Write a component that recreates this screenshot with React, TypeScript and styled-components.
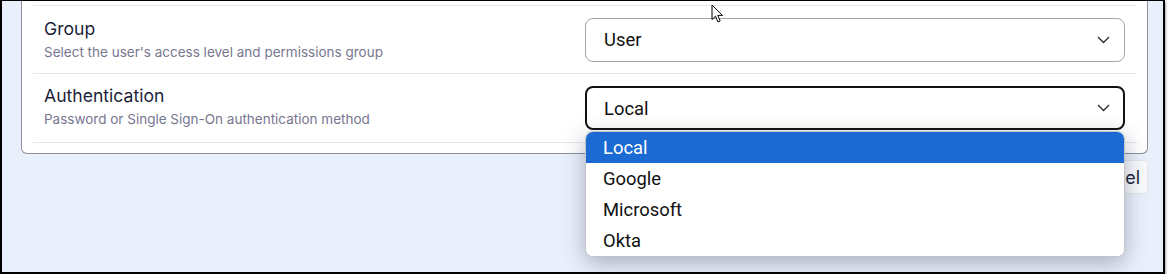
import React from "react";
import styled, { createGlobalStyle } from "styled-components";

const Global = createGlobalStyle`
  html, body { margin: 0; padding: 0; background: #ffffff; }
  * { box-sizing: border-box; }
`;

const Frame = styled.div`
  position: relative;
  width: 1165px;
  height: 274px;
  border-style: solid;
  border-color: #000;
  border-width: 1px 2px 2px 2px;
  background: #eaf0fb;
  overflow: hidden;
  box-shadow: 1px 2px 2px rgba(0, 0, 0, 0.35);
  padding: 0 15px 0 19px;
  display: flex;
  flex-direction: column;
`;

const Card = styled.div`
  background: #ffffff;
  border: 1px solid #8e8e9c;
  border-top: none;
  border-radius: 0 0 6px 6px;
  padding: 4px 10px 10px 11px;
`;

const Row = styled.div<{ $last?: boolean }>`
  display: flex;
  align-items: center;
  justify-content: space-between;
  height: ${(p) => (p.$last ? "70px" : "68px")};
  border-top: 1px solid #e6e7ec;
  border-bottom: ${(p) => (p.$last ? "1px solid #e6e7ec" : "none")};
  padding: 0 12px 0 11px;
`;

const Texts = styled.div<{ $lift?: number }>`
  display: flex;
  flex-direction: column;
  gap: 5px;
  padding-bottom: ${(p) => p.$lift ?? 2}px;
`;

const Label = styled.div`
  font-family: Inter, "Noto Sans", sans-serif;
  font-size: 17.6px;
  color: #1c1f3a;
`;

const Desc = styled.div`
  font-family: Inter, "Noto Sans", sans-serif;
  font-size: 13.5px;
  color: #77768f;
`;

const SelectWrap = styled.div`
  position: relative;
  width: 540px;
`;

const SelectBox = styled.div<{ $focused?: boolean }>`
  height: 44px;
  display: flex;
  align-items: center;
  justify-content: space-between;
  border-radius: 8px;
  border: ${(p) => (p.$focused ? "2px solid #111" : "1px solid #a3a3a8")};
  padding: ${(p) => (p.$focused ? "0 13px 0 17px" : "0 14px 0 18px")};
  background: #fff;
  font-family: Roboto, "Liberation Sans", sans-serif;
  font-size: 18.4px;
  color: #111;
`;

const Menu = styled.div`
  position: absolute;
  left: 0;
  right: 0;
  top: calc(100% + 1px);
  background: #fff;
  border: 1px solid #c4c4c8;
  border-radius: 8px;
  overflow: hidden;
  box-shadow: 0 6px 22px rgba(40, 50, 80, 0.35);
  z-index: 5;
`;

const Option = styled.div<{ $active?: boolean }>`
  height: 31px;
  display: flex;
  align-items: center;
  padding-left: 17px;
  font-family: Roboto, "Liberation Sans", sans-serif;
  font-size: 18.4px;
  background: ${(p) => (p.$active ? "#1b69d3" : "#fff")};
  color: ${(p) => (p.$active ? "#fff" : "#111")};
`;

const Actions = styled.div`
  display: flex;
  justify-content: flex-end;
  margin-top: 6px;
`;

const Button = styled.button`
  height: 34px;
  padding: 0 7px 0 12px;
  background: #f9fafc;
  border: 1px solid #e4e7ef;
  border-radius: 4px;
  font-family: Inter, "Noto Sans", sans-serif;
  font-size: 18px;
  color: #1c1f3a;
`;

const Cursor = styled.svg`
  position: absolute;
  left: 709px;
  top: 3px;
  z-index: 10;
`;

const Chevron = () => (
  <svg width="13" height="8" viewBox="0 0 13 8">
    <polyline points="1,1 6.5,6.5 12,1" fill="none" stroke="#2a2a2a" strokeWidth="1.3" />
  </svg>
);

export default function App() {
  return (
    <>
      <Global />
      <Frame>
        <Card>
          <Row>
            <Texts $lift={2}>
              <Label>Group</Label>
              <Desc>Select the user's access level and permissions group</Desc>
            </Texts>
            <SelectWrap>
              <SelectBox>
                <span>User</span>
                <Chevron />
              </SelectBox>
            </SelectWrap>
          </Row>
          <Row $last>
            <Texts $lift={4}>
              <Label>Authentication</Label>
              <Desc>Password or Single Sign-On authentication method</Desc>
            </Texts>
            <SelectWrap>
              <SelectBox $focused>
                <span>Local</span>
                <Chevron />
              </SelectBox>
              <Menu>
                <Option $active>Local</Option>
                <Option>Google</Option>
                <Option>Microsoft</Option>
                <Option>Okta</Option>
              </Menu>
            </SelectWrap>
          </Row>
        </Card>
        <Actions>
          <Button>Cancel</Button>
        </Actions>
        <Cursor width="13" height="20" viewBox="0 0 13 20">
          <path d="M1 1 L1 15.5 L4.5 12.2 L7 18 L9.2 17 L6.8 11.4 L11.5 11.4 Z" fill="#fff" stroke="#000" strokeWidth="1" strokeLinejoin="round" />
        </Cursor>
      </Frame>
    </>
  );
}
